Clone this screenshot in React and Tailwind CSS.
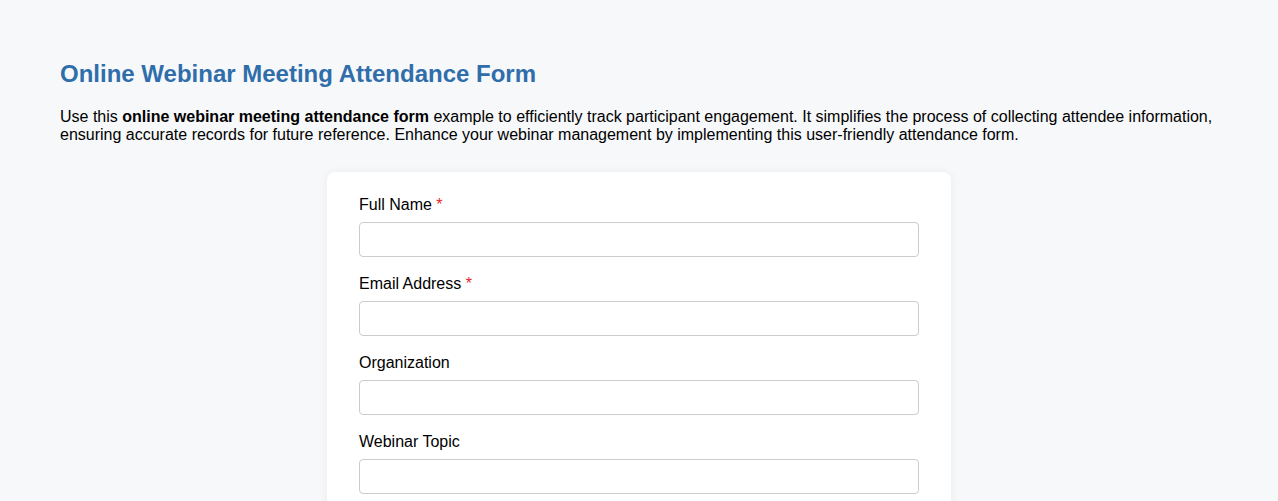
export default function App() {
  const fields = [
    { label: "Full Name", req: true },
    { label: "Email Address", req: true },
    { label: "Organization" },
    { label: "Webinar Topic" },
    { label: "Date of Attendance" },
  ];
  return (
    <div className="min-h-screen bg-[#f7f8fa] px-[60px] pt-[60px] pb-10 text-black" style={{ fontFamily: '"Liberation Sans", Arial, sans-serif' }}>
      <h1 className="text-[24px] leading-[28px] font-bold text-[#2f6eab]">Online Webinar Meeting Attendance Form</h1>
      <p className="mt-[20px] text-[16px] leading-[18px]">
        Use this <strong>online webinar meeting attendance form</strong> example to efficiently track participant engagement. It simplifies the process of collecting attendee information, ensuring accurate records for future reference. Enhance your webinar management by implementing this user-friendly attendance form.
      </p>
      <div className="mx-auto mt-[28px] w-[624px] rounded-[8px] bg-white px-8 pt-[24px] pb-6 shadow-[0_0_10px_rgba(0,0,0,0.06)]">
        {fields.map((f) => (
          <div key={f.label} className="mb-[18px]">
            <label className="mb-[8px] block text-[16px] leading-[18px]">
              {f.label}
              {f.req && <span className="text-[#e3242b]"> *</span>}
            </label>
            <input type="text" className="block h-[35px] w-full rounded-[4px] border border-[#cccccc] bg-white px-2 outline-none" />
          </div>
        ))}
      </div>
    </div>
  );
}
